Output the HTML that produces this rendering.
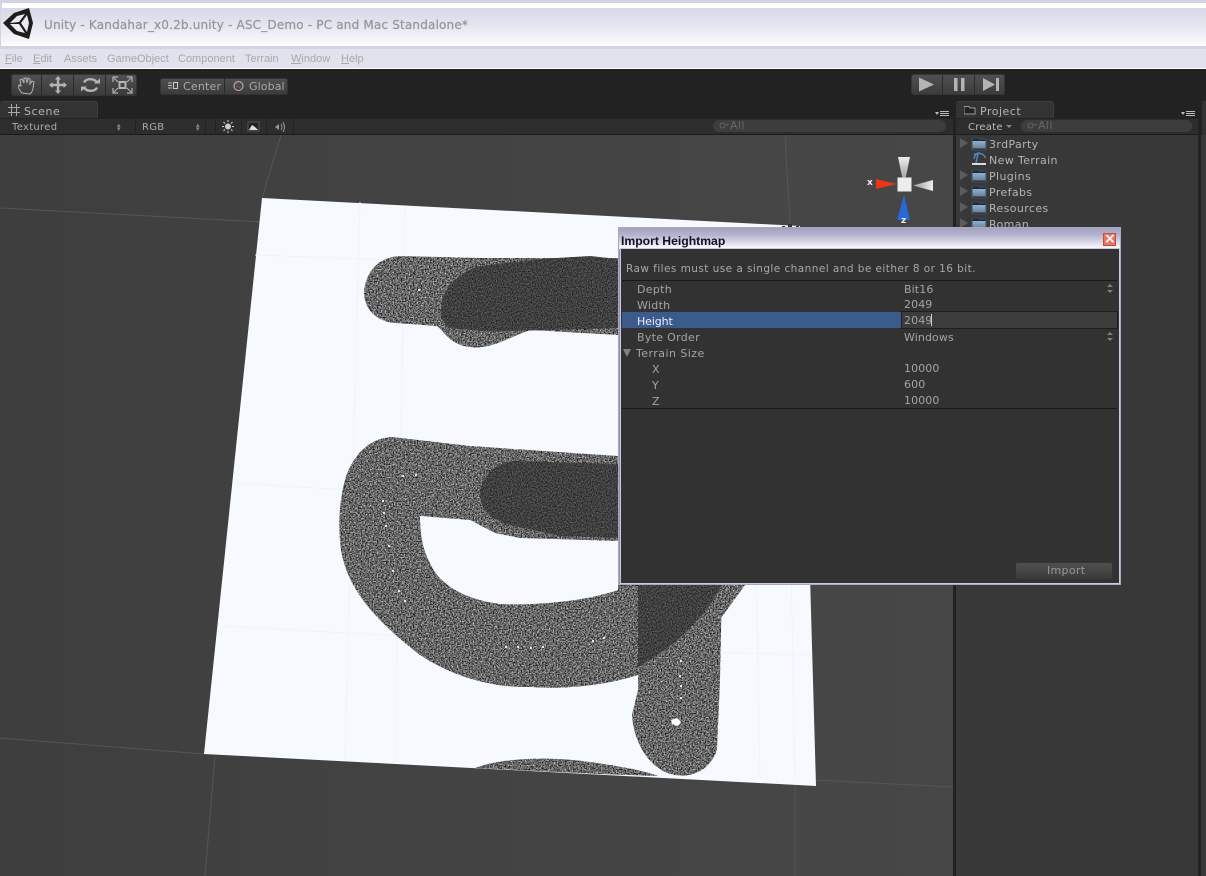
<!DOCTYPE html>
<html><head><meta charset="utf-8"><style>
html,body{margin:0;padding:0;background:#222}
body{position:relative;width:1206px;height:876px;overflow:hidden;font-family:"DejaVu Sans","Liberation Sans",sans-serif}
div{position:absolute;box-sizing:border-box}
.t{font-size:11px;letter-spacing:.38px;color:#b4b4b4;white-space:nowrap;line-height:14px}
.m{top:52px;font-family:"Liberation Sans",sans-serif;font-size:11px;color:#a9a9a0;line-height:14px;white-space:nowrap}
.m u{text-decoration:underline}
.d{color:#a4a4a4;font-size:11px;letter-spacing:.3px;line-height:14px;white-space:nowrap}
.v{letter-spacing:.1px}
</style></head><body>
<!-- title bar -->
<div style="left:0;top:0;width:1206px;height:49px;background:#d3d3e3"></div>
<div style="left:2px;top:3px;width:1204px;height:5px;background:#fff"></div>
<div style="left:1px;top:8px;width:1205px;height:38px;background:linear-gradient(#d8d9e8 0,#e4e5ef 45%,#f8f8fb 92%,#fff 100%)"></div>
<svg style="position:absolute;left:0;top:4px" width="40" height="38" viewBox="0 0 40 38"><path d="M3 19 L14 9 L29 4 L33 19 L29 35 L14 30 Z" fill="#1d1d1d"/><path d="M10 19 L17 12 L25 10 L19 18 Z M10 20 L19 20 L25 29 L17 27 Z M21 19 L27 11 L29 19 L27 28 Z" fill="#eceaf2"/></svg>
<div style="left:44px;top:17px;font-size:12px;font-weight:500;color:#96969e;line-height:16px;white-space:nowrap;letter-spacing:.18px;-webkit-text-stroke:.25px #96969e">Unity - Kandahar_x0.2b.unity - ASC_Demo - PC and Mac Standalone*</div>
<!-- menu -->
<div style="left:0;top:49px;width:1206px;height:20px;background:#e0e2ee;border-bottom:1px solid #fff"></div>
<div class="m" style="left:5px"><u>F</u>ile</div><div class="m" style="left:33px"><u>E</u>dit</div><div class="m" style="left:64px">Assets</div><div class="m" style="left:107px">GameObject</div><div class="m" style="left:178px">Component</div><div class="m" style="left:245px">Terrain</div><div class="m" style="left:291px"><u>W</u>indow</div><div class="m" style="left:341px"><u>H</u>elp</div>
<!-- dark base -->
<div style="left:0;top:69px;width:1206px;height:807px;background:#222"></div>
<!-- scene -->
<div style="left:0;top:135px;width:953px;height:741px;background:linear-gradient(90deg,#3e3e3e,#434343 50%,#474747)"></div>
<svg style="position:absolute;left:0;top:0" width="953" height="876" viewBox="0 0 953 876">
<defs>
<filter id="n1" x="0" y="0" width="100%" height="100%" color-interpolation-filters="sRGB"><feTurbulence type="fractalNoise" baseFrequency="0.75" numOctaves="2" seed="4"/><feColorMatrix type="matrix" values="1.500 0 0 0 -.35 1.500 0 0 0 -.35 1.500 0 0 0 -.35 0 0 0 0 1"/><feComposite operator="in" in2="SourceGraphic"/></filter>
<filter id="n2" x="0" y="0" width="100%" height="100%" color-interpolation-filters="sRGB"><feTurbulence type="fractalNoise" baseFrequency="0.8" numOctaves="2" seed="9"/><feColorMatrix type="matrix" values=".6 0 0 0 -.05 .6 0 0 0 -.05 .6 0 0 0 -.05 0 0 0 0 1"/><feComposite operator="in" in2="SourceGraphic"/></filter>
</defs>
<g stroke="#555" fill="none"><path d="M0 208L262 222M281 135L262 198M785 135L790 225M0 738L204 754M215 756L205 876M813 780L953 787M795 786L795 876"/></g>
<path d="M262 198L800 226L816 786L204 754Z" fill="#f6faff"/>
<g stroke="#f0f4f8" fill="none"><path d="M255 255L620 268M234 483L350 490M222 626L400 636M700 652L812 655M360 202L345 758M405 207L395 762M750 228L760 778M785 230L795 780"/></g>
<!-- light bands -->
<g filter="url(#n1)" fill="#000">
<path d="M364 292C366 270 380 257 400 256L480 258L618 258L618 335L530 330C510 337 490 350 470 347C450 345 445 332 437 326L395 323C378 322 364 310 364 292Z"/>
<path d="M618 456L470 446L392 437C365 438 350 462 345 480C338 505 338 535 342 555C350 595 385 628 420 655C450 675 490 688 530 687C570 690 640 685 690 650C715 630 730 605 745 585L618 585L618 590C590 600 540 606 500 604C470 600 450 590 437 575C427 560 420 545 420 516L470 520L495 533L520 538L618 541Z"/>
<path d="M638 585L638 690L632 715C634 745 650 765 665 772C690 782 710 770 717 750L720 680L722 585Z"/>
<path d="M475 768C500 758 550 756 590 762C620 766 650 772 658 776L600 774Z"/>
</g>
<!-- dark overlays -->
<g filter="url(#n2)" fill="#000">
<path d="M441 310C441 290 458 272 480 266L540 259L590 256L618 259L618 328L550 330L510 331C490 332 470 330 450 328C444 325 441 318 441 310Z"/>
<path d="M480 495C480 478 495 462 515 461L618 464L618 538L560 536L510 525C492 520 480 510 480 495Z"/>
<path d="M638 585L722 585L716 595C702 620 670 650 638 667Z"/>
</g>
<g fill="#fff"><path d="M671 720L677 718L681 722L678 726L672 724Z"/><path opacity=".85" d="M679 675h2v2h-2zM680 685h2v2h-2zM680 697h2v2h-2zM680 660h2v2h-2zM382 500h2v2h-2zM383 512h2v2h-2zM385 525h2v2h-2zM388 545h2v2h-2zM392 570h2v2h-2zM398 590h2v2h-2zM404 600h2v2h-2zM402 475h2v2h-2zM415 474h2v2h-2zM505 646h2v2h-2zM517 646h2v2h-2zM530 647h2v2h-2zM542 646h2v2h-2zM592 640h2v2h-2zM603 637h2v2h-2zM418 289h2v2h-2z"/></g>
<path d="M782 226h3v2h-3zM788 224h4v4h-4zM796 226h3v2h-3z" fill="#333"/>
</svg>
<!-- gizmo -->
<svg style="position:absolute;left:860px;top:150px" width="80" height="80" viewBox="0 0 80 80"><defs><linearGradient id="g1" x1="0" y1="0" x2="0" y2="1"><stop offset="0" stop-color="#eee"/><stop offset="1" stop-color="#999"/></linearGradient><linearGradient id="g2" x1="1" y1="0" x2="0" y2="0"><stop offset="0" stop-color="#eee"/><stop offset="1" stop-color="#999"/></linearGradient></defs><path d="M16 29L37 34L16 39Z" fill="#e8361b"/><path d="M38 7L50 7L45 31H43Z" fill="url(#g1)"/><path d="M73 30V41L53 35.500Z" fill="url(#g2)"/><path d="M44 45L50 70H37Z" fill="#2a68d8"/><rect x="37.500" y="27.500" width="14" height="14" fill="#ededed"/></svg>
<div style="left:867px;top:177px;font:bold 9px/12px 'DejaVu Sans';color:#eee">x</div>
<div style="left:901px;top:215px;font:bold 9px/12px 'DejaVu Sans';color:#eee">z</div>
<!-- toolbar -->
<div style="left:11px;top:74px;width:126px;height:22px;border-radius:3px;background:linear-gradient(#515151,#393939);box-shadow:inset 0 0 0 1px #333"></div>
<div style="left:41px;top:75px;width:1px;height:20px;background:#2a2a2a"></div><div style="left:73px;top:75px;width:1px;height:20px;background:#2a2a2a"></div><div style="left:105px;top:75px;width:1px;height:20px;background:#2a2a2a"></div>
<svg style="position:absolute;left:11px;top:74px" width="126" height="22" viewBox="0 0 126 22" fill="none" stroke="#b4b4b4"><path d="M11 19C8 16 7 13 8 11L10 12L9 6L11 5L13 9V4L15 4L16 9L17 4L19 5L19 10L21 7L23 8L22 14C22 17 20 19 19 20Z" stroke-width="1"/><path d="M47 5V17M41 11H53" stroke-width="2.400"/><path d="M47 2L50 5.500H44ZM47 20L50 16.500H44ZM38 11L41.500 8V14ZM56 11L52.500 8V14Z" fill="#b4b4b4" stroke="none"/><path d="M73 8.500C75 4 84 4 86 9M86 13.500C84 18 75 18 73 13" stroke-width="2.400"/><path d="M83 9.500H89V4.500ZM76 12.500H70V17.500Z" fill="#b4b4b4" stroke="none"/><rect x="108.500" y="8" width="6" height="6" stroke-width="2"/><path d="M102 8V3H107M116 3H121V8M121 14V19H116M107 19H102V14" stroke-width="1.200"/><path d="M103 4L107 8M120 4L116 8M120 18L116 14M103 18L107 14" stroke-width="1"/></svg>
<div style="left:160px;top:78px;width:128px;height:17px;border-radius:3px;background:linear-gradient(#505050,#3a3a3a);box-shadow:inset 0 0 0 1px #333"></div>
<div style="left:224px;top:78px;width:1px;height:17px;background:#2a2a2a"></div>
<svg style="position:absolute;left:167px;top:81px" width="12" height="10"><path d="M1 2h4M1 4.500h4M1 7h4" stroke="#bbb"/><rect x="6.500" y="1.500" width="4" height="6" fill="none" stroke="#ccc"/></svg>
<div class="t" style="left:183px;top:80px;color:#aaa;letter-spacing:.2px">Center</div>
<svg style="position:absolute;left:232px;top:80px" width="13" height="12"><circle cx="6.500" cy="6" r="4.500" fill="none" stroke="#aaa" stroke-width="1.200"/><path d="M5 3V7H9" fill="none" stroke="#8d5050"/></svg>
<div class="t" style="left:249px;top:80px;color:#aaa;letter-spacing:.1px">Global</div>
<div style="left:911px;top:74px;width:94px;height:21px;border-radius:3px;background:linear-gradient(#515151,#3c3c3c);box-shadow:inset 0 0 0 1px #353535"></div>
<div style="left:942px;top:75px;width:1px;height:20px;background:#2d2d2d"></div><div style="left:974px;top:75px;width:1px;height:20px;background:#2d2d2d"></div>
<svg style="position:absolute;left:911px;top:74px" width="94" height="21" fill="#b4b4b4"><path d="M8 3.500L23 10.500L8 17.500Z"/><rect x="43" y="4" width="3.500" height="13"/><rect x="50" y="4" width="3.500" height="13"/><path d="M72 4L84 10.500L72 17Z"/><rect x="85" y="4" width="3" height="13"/></svg>
<!-- scene tab -->
<div style="left:0;top:101px;width:98px;height:17px;background:#333;border-radius:3px 3px 0 0;border-top:1px solid #3f3f3f;border-right:1px solid #3d3d3d"></div>
<svg style="position:absolute;left:8px;top:104px" width="13" height="13"><path d="M3.500 0V12M8.500 0V12M0 3.500H12M0 8.500H12" stroke="#a8a8a8"/></svg>
<div class="t" style="left:24px;top:105px;letter-spacing:.55px">Scene</div>
<div style="left:0;top:118px;width:953px;height:17px;background:#2d2d2d;border-bottom:1px solid #1b1b1b;border-top:1px solid #242424"></div>
<div class="t" style="left:12px;top:121px;font-size:10px;color:#aaa;letter-spacing:.3px">Textured</div>
<div class="t" style="left:142px;top:121px;font-size:10px;color:#aaa;letter-spacing:.3px">RGB</div>
<div style="left:117px;top:123px;color:#888;font-size:7px;line-height:4px;text-align:center">▴<br>▾</div><div style="left:196px;top:123px;color:#888;font-size:7px;line-height:4px">▴<br>▾</div>
<div style="left:135px;top:118px;width:1px;height:17px;background:#222"></div><div style="left:205px;top:118px;width:1px;height:17px;background:#222"></div><div style="left:215px;top:118px;width:1px;height:17px;background:#222"></div><div style="left:241px;top:118px;width:1px;height:17px;background:#222"></div><div style="left:266px;top:118px;width:1px;height:17px;background:#222"></div><div style="left:293px;top:118px;width:1px;height:17px;background:#222"></div>
<svg style="position:absolute;left:221px;top:120px" width="72" height="14" fill="none" stroke="#ccc"><circle cx="7" cy="6.500" r="2.500" fill="#ccc"/><path d="M7 0V2M7 11V13M1 6.500H3M11 6.500H13M2.500 2L4 3.500M10 9.500L11.500 11M2.500 11L4 9.500M10 3.500L11.500 2"/><rect x="27" y="2" width="11" height="9" fill="#222" stroke="#555"/><path d="M28 10L31 5L34 7L37 10Z" fill="#ddd" stroke="none"/><path d="M54 7L58 4V10Z" fill="#999" stroke="none"/><path d="M60 4Q62 7 60 10M62 2Q65 7 62 12" stroke="#999"/></svg>
<div style="left:713px;top:120px;width:233px;height:12px;border-radius:6px;background:#3d3d3d"></div>
<div class="t" style="left:730px;top:119px;color:#666">All</div>
<svg style="position:absolute;left:719px;top:122px" width="11" height="8"><circle cx="3.500" cy="3.500" r="2.500" fill="none" stroke="#666"/><path d="M7 2h3l-1.500 2z" fill="#666"/></svg>
<svg style="position:absolute;left:935px;top:110px" width="15" height="8" fill="#bbb"><path d="M0 2h4l-2 3z"/><rect x="5" y="1" width="9" height="1"/><rect x="5" y="3" width="9" height="1"/><rect x="5" y="5" width="9" height="1"/></svg>
<!-- project panel -->
<div style="left:956px;top:135px;width:242px;height:741px;background:#383838"></div>
<div style="left:956px;top:101px;width:98px;height:17px;background:#333;border-radius:3px 3px 0 0;border-top:1px solid #3f3f3f;border-right:1px solid #3d3d3d"></div>
<svg style="position:absolute;left:964px;top:105px" width="12" height="10"><path d="M0 1.500H5L6 3H11V9H0Z" fill="#222" stroke="#999"/></svg>
<div class="t" style="left:980px;top:105px;letter-spacing:.5px">Project</div>
<div style="left:956px;top:118px;width:242px;height:17px;background:#2d2d2d;border-bottom:1px solid #1b1b1b;border-top:1px solid #242424"></div>
<div class="t" style="left:968px;top:121px;font-size:10px;color:#bbb;letter-spacing:.25px">Create</div>
<div style="left:1006px;top:125px;width:0;height:0;border:3px solid transparent;border-top:3px solid #888"></div>
<div style="left:1021px;top:120px;width:171px;height:12px;border-radius:6px;background:#3d3d3d"></div>
<div class="t" style="left:1038px;top:119px;color:#666">All</div>
<svg style="position:absolute;left:1027px;top:122px" width="11" height="8"><circle cx="3.500" cy="3.500" r="2.500" fill="none" stroke="#666"/><path d="M7 2h3l-1.500 2z" fill="#666"/></svg>
<svg style="position:absolute;left:1181px;top:110px" width="15" height="8" fill="#bbb"><path d="M0 2h4l-2 3z"/><rect x="5" y="1" width="9" height="1"/><rect x="5" y="3" width="9" height="1"/><rect x="5" y="5" width="9" height="1"/></svg>
<div style="left:1198px;top:135px;width:3px;height:741px;background:#222"></div>
<div style="left:1201px;top:135px;width:5px;height:741px;background:#383838"></div>
<div style="left:1202px;top:101px;width:4px;height:34px;background:#333"></div>
<svg style="position:absolute;left:960px;top:136px" width="30" height="92">
<defs><linearGradient id="fg" x1="0" y1="0" x2="0" y2="1"><stop offset="0" stop-color="#8fb0d4"/><stop offset="1" stop-color="#6a7f99"/></linearGradient><g id="f"><path d="M0 2H6L7 3H14V14H0Z" fill="#1f2a36" stroke="#56677c" stroke-width=".6"/><rect x="0.500" y="5" width="13" height="7.500" fill="url(#fg)"/></g></defs>
<path d="M0 2V12L8 7Z M0 34V44L8 39Z M0 50V60L8 55Z M0 66V76L8 71Z M0 82V92L8 87Z" fill="#5c5c5c"/>
<use href="#f" x="12" y="0"/><use href="#f" x="12" y="32"/><use href="#f" x="12" y="48"/><use href="#f" x="12" y="64"/><use href="#f" x="12" y="80"/>
<path d="M14 19C16 17 20 17 22 18M18 17C21 17 25 19 25 22M18 17C15 19 14 21 14 23M18 18L16 27" stroke="#4f87b8" fill="none" stroke-width="1.500"/><path d="M12 28H26" stroke="#d5dde5" stroke-width="2"/>
</svg>
<div class="t" style="left:989px;top:138px">3rdParty</div><div class="t" style="left:989px;top:154px">New Terrain</div><div class="t" style="left:989px;top:170px">Plugins</div><div class="t" style="left:989px;top:186px">Prefabs</div><div class="t" style="left:989px;top:202px">Resources</div><div class="t" style="left:989px;top:218px">Roman</div>
<!-- dialog -->
<div style="left:618px;top:227px;width:503px;height:358px;background:#8f8fae;border:1px solid #a9a9c4"></div>
<div style="left:619px;top:228px;width:501px;height:21px;background:linear-gradient(#a3a2c0 0,#b6b5cf 35%,#e8e8f2 80%,#fff 100%)"></div>
<div style="left:621px;top:234px;font:bold 12.200px/14px 'Liberation Sans',sans-serif;color:#10102a;white-space:nowrap">Import Heightmap</div>
<div style="left:1103px;top:233px;width:13px;height:13px;background:#e87766;border:1px solid #c74a3a;color:#fff;font:bold 14px/11px 'DejaVu Sans';text-align:center">×</div>
<div style="left:621px;top:249px;width:498px;height:334px;background:#323232;box-shadow:0 0 0 1px #c9c9dc"></div>
<div class="d" style="left:626px;top:262px;color:#a8a8a8;letter-spacing:.44px;font-size:10.500px">Raw files must use a single channel and be either 8 or 16 bit.</div>
<div style="left:622px;top:280px;width:495px;height:1px;background:#191919"></div>
<div style="left:622px;top:408px;width:495px;height:1px;background:#191919"></div>
<div style="left:622px;top:312px;width:279px;height:16px;background:#3b5b8c"></div>
<div style="left:901px;top:311px;width:217px;height:18px;background:#3c3c3c;border:1px solid #1e1e1e"></div>
<div class="d" style="left:637px;top:283px">Depth</div><div class="d" style="left:637px;top:299px">Width</div><div class="d" style="left:637px;top:315px;color:#eef;letter-spacing:-.1px">Height</div><div class="d" style="left:637px;top:331px">Byte Order</div><div class="d" style="left:636px;top:347px;letter-spacing:.45px">Terrain Size</div><div class="d" style="left:652px;top:363px">X</div><div class="d" style="left:652px;top:379px">Y</div><div class="d" style="left:652px;top:395px">Z</div>
<div class="d v" style="left:904px;top:283px">Bit16</div><div class="d v" style="left:904px;top:298px">2049</div><div class="d v" style="left:904px;top:314px">2049</div><div class="d v" style="left:904px;top:331px">Windows</div><div class="d v" style="left:904px;top:362px">10000</div><div class="d v" style="left:904px;top:378px">600</div><div class="d v" style="left:904px;top:394px">10000</div>
<div style="left:931px;top:314px;width:1px;height:12px;background:#ccc"></div>
<svg style="position:absolute;left:622px;top:283px" width="495" height="75" fill="#808080"><path d="M485 4L488 1L491 4ZM485 7L488 10L491 7ZM485 52L488 49L491 52ZM485 55L488 58L491 55ZM1 66H9L5 74Z"/></svg>
<div style="left:1015px;top:562px;width:98px;height:18px;border-radius:3px;background:linear-gradient(#515151,#393939);box-shadow:inset 0 0 0 1px #333"></div>
<div class="d" style="left:1047px;top:564px;color:#999">Import</div>
</body></html>
